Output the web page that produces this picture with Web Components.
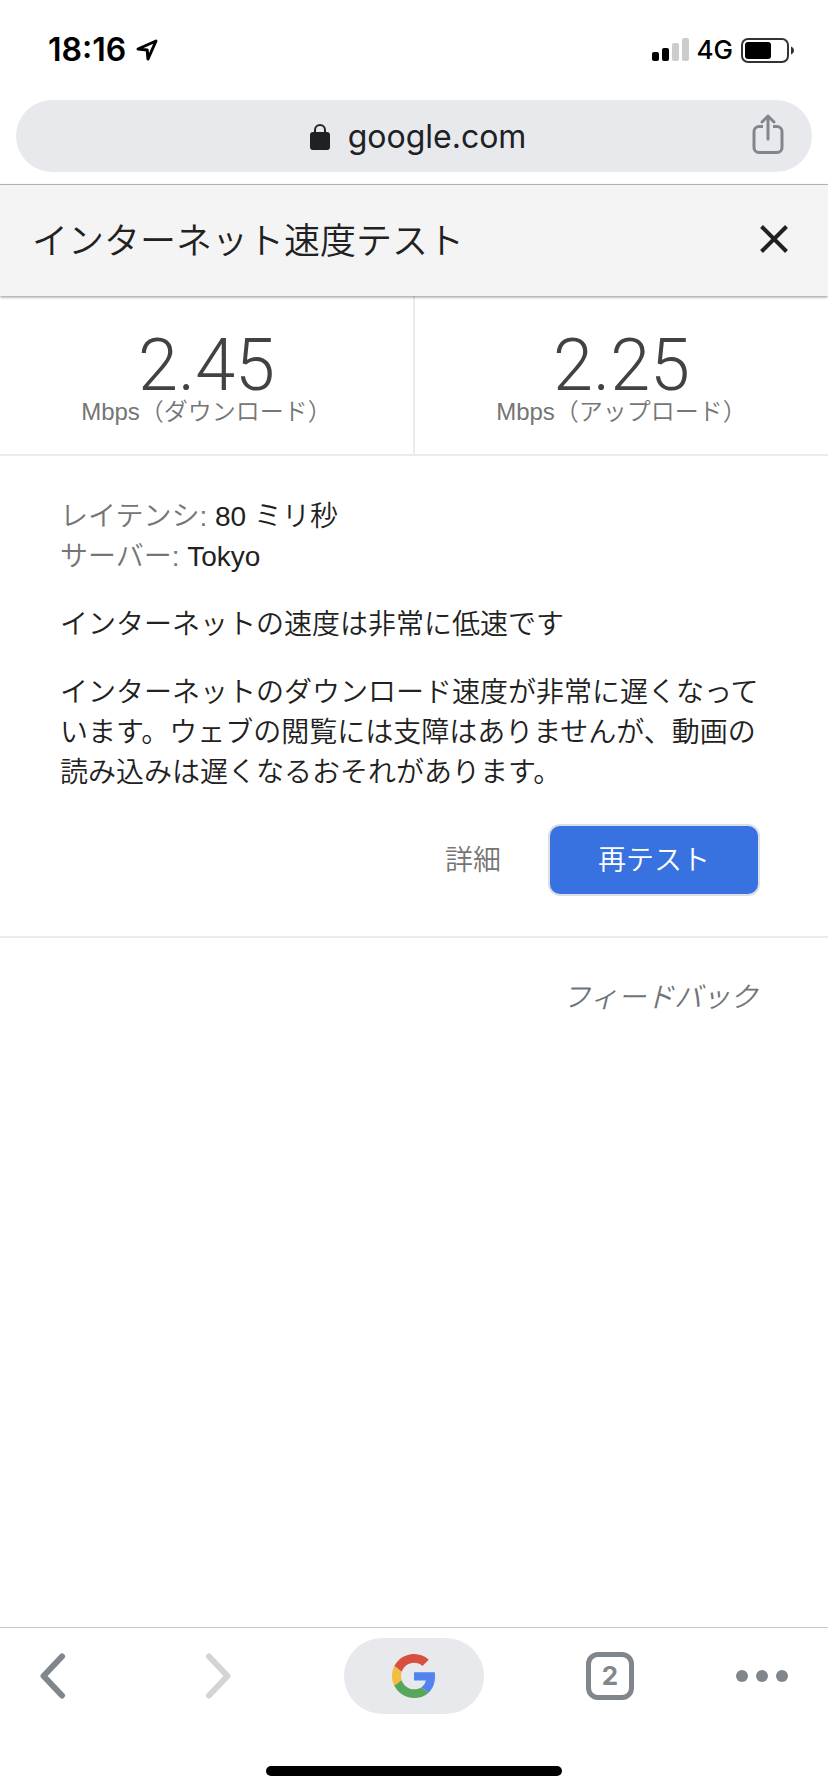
<!DOCTYPE html>
<html lang="ja">
<head>
<meta charset="utf-8">
<meta name="viewport" content="width=device-width, initial-scale=1">
<title>インターネット速度テスト</title>
<style>
  html { height: 100%; }
  body {
    margin: 0;
    min-height: 100%;
    display: flex;
    flex-direction: column;
    background: #fff;
    color: #212121;
    font-family: "Liberation Sans", "Noto Sans CJK JP", sans-serif;
    font-weight: 350;
    font-size: 28px;
    line-height: 40px;
  }
  main { flex: 1; }
</style>
</head>
<body>
  <status-bar time="18:16" network="4G"></status-bar>
  <address-bar>google.com</address-bar>
  <main>
    <panel-header>インターネット速度テスト</panel-header>
    <speed-results>
      <speed-metric value="2.45">Mbps（ダウンロード）</speed-metric>
      <speed-metric value="2.25">Mbps（アップロード）</speed-metric>
    </speed-results>
    <test-summary>
      <test-fact slot="facts" label="レイテンシ">80 ミリ秒</test-fact>
      <test-fact slot="facts" label="サーバー">Tokyo</test-fact>
      <span slot="headline">インターネットの速度は非常に低速です</span>
      <span slot="detail">インターネットのダウンロード速度が非常に遅くなっています。ウェブの閲覧には支障はありませんが、動画の読み込みは遅くなるおそれがあります。</span>
      <action-button slot="actions">詳細</action-button>
      <action-button slot="actions" primary>再テスト</action-button>
    </test-summary>
    <feedback-link>フィードバック</feedback-link>
  </main>
  <browser-toolbar tabs="2"></browser-toolbar>

<script>
  const RESET = `
    *, *::before, *::after { box-sizing: border-box; }
    button { appearance: none; margin: 0; padding: 0; border: 0; background: none; font: inherit; color: inherit; cursor: pointer; }
    svg { display: block; flex: none; }
  `;

  function define(name, render) {
    customElements.define(name, class extends HTMLElement {
      constructor() {
        super();
        this.attachShadow({ mode: 'open' });
      }
      connectedCallback() {
        const template = document.createElement('template');
        template.innerHTML = '<style>' + RESET + '</style>' + render(this);
        this.shadowRoot.replaceChildren(template.content.cloneNode(true));
      }
    });
  }

  define('status-bar', el => `
    <style>
      :host { display: flex; align-items: center; justify-content: space-between; height: 100px; padding: 0 34px 0 48px; color: #000; font-family: Inter, sans-serif; }
      div { display: flex; align-items: center; gap: 8px; }
      .left { gap: 10px; }
      .time { font-size: 32px; font-weight: 600; }
      .net { font-size: 26px; font-weight: 500; }
    </style>
    <div class="left">
      <span class="time">${el.getAttribute('time')}</span>
      <svg width="22" height="22" viewBox="0 0 22 22" fill="none" stroke="#000" stroke-width="3" stroke-linejoin="round"><path d="M2 10 20 2l-8 18-.8-9z"/></svg>
    </div>
    <div>
      <svg width="37" height="24" viewBox="0 0 37 24"><rect y="14" width="7" height="9" rx="2"/><rect x="10" y="10" width="7" height="13" rx="2"/><g fill="#ccc"><rect x="20" y="5" width="7" height="18" rx="2"/><rect x="30" width="7" height="23" rx="2"/></g></svg>
      <span class="net">${el.getAttribute('network')}</span>
      <svg width="53" height="25" viewBox="0 0 53 25"><rect x="1" y="1" width="46" height="23" rx="6" fill="none" stroke="#333" stroke-width="2"/><rect x="4" y="4" width="26" height="17" rx="3"/><path d="M50 8.500c4 1.500 4 6.500 0 8z" fill="#333"/></svg>
    </div>
  `);

  define('address-bar', () => `
    <style>
      :host { display: block; padding: 0 16px 12px; border-bottom: 1px solid #c0c0c2; font-family: Inter, sans-serif; font-weight: 400; color: #202124; }
      .pill { display: grid; grid-template-columns: 60px 1fr 60px; align-items: center; height: 72px; border-radius: 36px; background: #e8e9ed; }
      .url { grid-column: 2; display: flex; align-items: center; justify-content: center; gap: 18px; height: 72px; padding: 2px 0 0 8px; font-size: 32px; }
      .share { padding-bottom: 4px; }
    </style>
    <div class="pill">
      <button class="url">
        <svg width="20" height="26" viewBox="0 0 20 26"><rect y="8" width="20" height="18" rx="3" fill="#202124"/><path d="M5 9V6a5 5 0 0 1 10 0v3" fill="none" stroke="#202124" stroke-width="2"/></svg>
        <slot></slot>
      </button>
      <button class="share" aria-label="共有">
        <svg width="32" height="40" viewBox="0 0 32 40" fill="none" stroke="#80868b" stroke-width="3" stroke-linecap="round" stroke-linejoin="round"><path d="M11 12.500H7a5 5 0 0 0-5 5V33.500a5 5 0 0 0 5 5H25a5 5 0 0 0 5-5V17.500a5 5 0 0 0-5-5H21" stroke-linecap="butt"/><path d="M16 25V2M10 8l6-6 6 6"/></svg>
      </button>
    </div>
  `);

  define('panel-header', () => `
    <style>
      :host { display: flex; align-items: center; justify-content: space-between; height: 111px; padding: 0 36px 0 32px; background: #f4f4f4; box-shadow: 0 1px 3px rgba(0,0,0,.45); position: relative; }
      h1 { margin: 0; padding-top: 2px; font-size: 36px; line-height: 48px; font-weight: inherit; }
      button { padding: 4px 4px 8px; }
    </style>
    <h1><slot></slot></h1>
    <button aria-label="閉じる"><svg width="28" height="28" viewBox="0 0 28 28" stroke="#212121" stroke-width="4" fill="none"><path d="M1.500 1.500l25 25M26.500 1.500l-25 25"/></svg></button>
  `);

  define('speed-results', () => `
    <style>
      :host { display: grid; grid-template-columns: 1fr 1fr; border-bottom: 2px solid #ebebeb; }
      ::slotted(:first-child) { border-right: 1px solid #ebebeb; }
      ::slotted(:last-child) { border-left: 1px solid #ebebeb; }
    </style>
    <slot></slot>
  `);

  define('speed-metric', el => `
    <style>
      :host { display: flex; flex-direction: column; align-items: center; padding: 38px 0 28px; }
      .value { font-family: Roboto, "Liberation Sans", sans-serif; font-size: 72px; font-weight: 300; line-height: 64px; color: #424242; }
      .unit { font-size: 24px; line-height: 28px; color: #757575; }
    </style>
    <span class="value">${el.getAttribute('value')}</span>
    <span class="unit"><slot></slot></span>
  `);

  define('test-summary', () => `
    <style>
      :host { display: block; padding: 41px 68px 40px 60px; border-bottom: 2px solid #ebebeb; }
      h2, p { margin: 28px 0 0; font: inherit; }
      .actions { display: flex; justify-content: flex-end; align-items: center; gap: 47px; margin-top: 31px; }
    </style>
    <div><slot name="facts"></slot></div>
    <h2><slot name="headline"></slot></h2>
    <p><slot name="detail"></slot></p>
    <div class="actions"><slot name="actions"></slot></div>
  `);

  define('test-fact', el => `
    <style>
      :host { display: block; }
      .label { color: #757575; }
    </style>
    <span class="label">${el.getAttribute('label')}:</span> <slot></slot>
  `);

  define('action-button', () => `
    <style>
      :host { display: block; }
      button { padding-top: 2px; color: #757575; height: 72px; }
      :host([primary]) button { padding: 2px 48px 0; border: 2px solid #dcdfe4; border-radius: 12px; background: #3871e0; color: #fff; }
    </style>
    <button><slot></slot></button>
  `);

  define('feedback-link', () => `
    <style>
      :host { display: flex; justify-content: flex-end; padding: 40px 70px 36px; }
      a { color: #70757a; font-style: italic; text-decoration: none; }
    </style>
    <a href="#feedback"><slot></slot></a>
  `);

  define('browser-toolbar', el => `
    <style>
      :host { display: block; border-top: 1px solid #c8c8ca; padding: 10px 0 16px; }
      nav { display: flex; align-items: center; justify-content: space-between; padding: 0 40px; }
      button { display: flex; align-items: center; justify-content: center; height: 76px; }
      .back { width: 52px; justify-content: flex-start; }
      .forward { width: 48px; }
      .home { width: 140px; border-radius: 38px; background: #e8e9ed; }
      .count { display: flex; align-items: center; justify-content: center; width: 48px; height: 48px; border: 5px solid #80868b; border-radius: 12px; font: 700 26px/38px Inter, sans-serif; color: #80868b; }
      .indicator { width: 296px; height: 10px; margin: 52px auto 0; border-radius: 5px; background: #000; }
    </style>
    <nav>
      <button class="back" aria-label="戻る"><svg width="26" height="46" viewBox="0 0 26 46" fill="none" stroke="#80868b" stroke-width="6" stroke-linecap="round" stroke-linejoin="round"><path d="M22 3.500 3.500 23 22 42.500"/></svg></button>
      <button class="forward" aria-label="進む"><svg width="26" height="46" viewBox="0 0 26 46" fill="none" stroke="#d4d4d4" stroke-width="6" stroke-linecap="round" stroke-linejoin="round"><path d="M4 3.500 22.500 23 4 42.500"/></svg></button>
      <button class="home" aria-label="Google"><svg width="44" height="44" viewBox="0 0 48 48"><path fill="#d94f3f" d="M24 9.500c3.540 0 6.710 1.220 9.210 3.600l6.850-6.850C35.900 2.380 30.470 0 24 0 14.620 0 6.510 5.380 2.560 13.220l7.980 6.190C12.430 13.720 17.740 9.500 24 9.500z"/><path fill="#5384ee" d="M46.980 24.550c0-1.570-.15-3.090-.38-4.550H24v9.020h12.940c-.58 2.960-2.260 5.480-4.780 7.180l7.730 6c4.510-4.180 7.090-10.360 7.090-17.650z"/><path fill="#f3bd42" d="M10.530 28.590c-.48-1.450-.76-2.990-.76-4.590s.27-3.140.76-4.590l-7.980-6.190C.92 16.460 0 20.120 0 24c0 3.880.92 7.540 2.560 10.780l7.970-6.190z"/><path fill="#58a55c" d="M24 48c6.480 0 11.930-2.130 15.890-5.810l-7.730-6c-2.150 1.450-4.920 2.300-8.160 2.300-6.260 0-11.570-4.220-13.470-9.910l-7.980 6.190C6.510 42.620 14.620 48 24 48z"/></svg></button>
      <button aria-label="タブ"><span class="count">${el.getAttribute('tabs')}</span></button>
      <button aria-label="メニュー"><svg width="52" height="12" viewBox="0 0 52 12" fill="#80868b"><circle cx="6" cy="6" r="6"/><circle cx="26" cy="6" r="6"/><circle cx="46" cy="6" r="6"/></svg></button>
    </nav>
    <div class="indicator"></div>
  `);
</script>
</body>
</html>
